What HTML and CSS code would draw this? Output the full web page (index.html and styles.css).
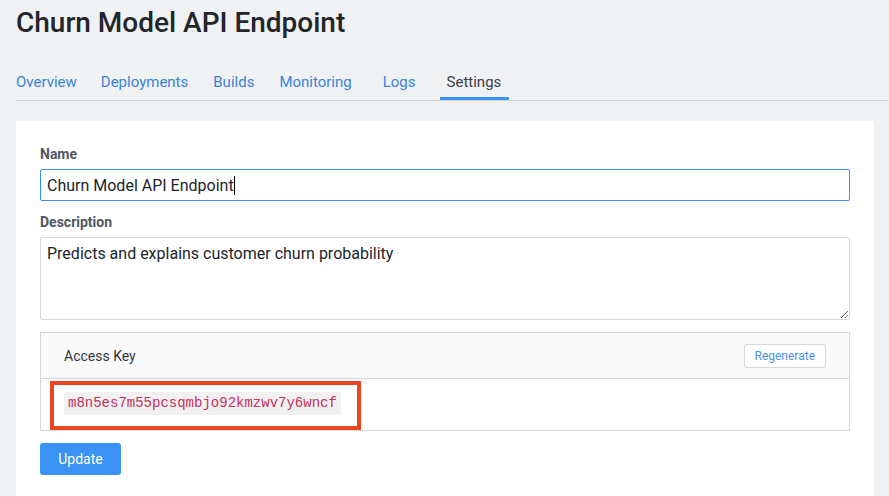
FILE: index.html
```html
<!DOCTYPE html>
<html lang="en">
<head>
<meta charset="utf-8">
<title>Churn Model API Endpoint</title>
<link rel="stylesheet" href="styles.css">
</head>
<body>
<header class="page-header">
  <h1 class="title">Churn Model API Endpoint</h1>
  <nav class="tabs">
    <a class="tab">Overview</a>
    <a class="tab">Deployments</a>
    <a class="tab">Builds</a>
    <a class="tab wide">Monitoring</a>
    <a class="tab wide">Logs</a>
    <a class="tab active">Settings</a>
  </nav>
</header>
<main class="card">
  <label class="label">Name</label>
  <div class="input focused">Churn Model API Endpoint<span class="caret"></span></div>
  <label class="label">Description</label>
  <textarea class="textarea">Predicts and explains customer churn probability</textarea>
  <section class="key-panel">
    <div class="key-head">
      <span class="key-title">Access Key</span>
      <button class="btn-outline">Regenerate</button>
    </div>
    <div class="key-body">
      <code class="key-code">m8n5es7m55pcsqmbjo92kmzwv7y6wncf</code>
      <span class="highlight"></span>
    </div>
  </section>
  <button class="btn-primary">Update</button>
</main>
</body>
</html>
```
FILE: styles.css
```css
* { box-sizing: border-box; }
html, body { margin: 0; padding: 0; }
body {
  background: #f0f1f3;
  font-family: Roboto, "Noto Sans", sans-serif;
  color: #212529;
  height: 496px;
  overflow: hidden;
}
.page-header {
  padding-left: 16px;
}
.title {
  margin: 0;
  padding-top: 6px;
  font-size: 28px;
  line-height: 34px;
  font-weight: 500;
  color: #22262b;
}
.tabs {
  display: flex;
  margin-top: 27px;
  border-bottom: 1px solid #d4d6d9;
  align-items: stretch;
}
.tab {
  font-size: 15px;
  color: #3a83d6;
  padding: 0 7px;
  margin-right: 11px;
  line-height: 30px;
  border-bottom: 3px solid transparent;
}
.tab:first-child { padding-left: 0; margin-right: 10px; }
.tab.wide { margin-right: 17px; }
.tab.active {
  color: #3c3f44;
  padding-right: 8px;
  border-bottom-color: #3a92f5;
}
.card {
  background: #fff;
  margin: 20px 15px 0 16px;
  padding: 23px 24px 21px;
  display: flex;
  flex-direction: column;
}
.label {
  font-size: 14px;
  font-weight: 700;
  color: #50575f;
  line-height: 20px;
  margin-bottom: 5px;
}
.input {
  height: 32px;
  border: 1px solid #3b8ff0;
  border-radius: 2px;
  font-size: 16px;
  padding: 0 6px;
  color: #212529;
  margin-bottom: 11px;
  display: flex;
  align-items: center;
}
.caret {
  display: inline-block;
  width: 1px;
  height: 19px;
  background: #000;
}
.textarea {
  height: 83px;
  border: 1px solid #d6d8db;
  border-radius: 2px;
  font-family: Roboto, "Noto Sans", sans-serif;
  font-size: 16px;
  line-height: 20px;
  padding: 6px 6px;
  color: #212529;
  margin: 0 0 12px;
  resize: vertical;
  outline: none;
}
.key-panel {
  border: 1px solid #d6d8db;
  margin-bottom: 12px;
}
.key-head {
  height: 46px;
  background: #fafafa;
  border-bottom: 1px solid #d6d8db;
  display: flex;
  align-items: center;
  justify-content: space-between;
  padding: 1px 23px 0;
}
.key-title {
  font-size: 14px;
  color: #32363a;
}
.btn-outline {
  height: 24px;
  padding: 0 10px;
  background: #fff;
  border: 1px solid #d6d8db;
  border-radius: 2px;
  color: #4a90e8;
  font-family: Roboto, "Noto Sans", sans-serif;
  font-size: 12px;
}
.key-body {
  position: relative;
  height: 51px;
  padding: 13px 23px 0;
}
.key-code {
  display: inline-block;
  background: #f2f0f1;
  color: #c2305c;
  font-family: "Liberation Mono", "DejaVu Sans Mono", monospace;
  font-size: 14px;
  line-height: 23px;
  padding: 0 4px;
  border-radius: 2px;
}
.highlight {
  position: absolute;
  left: 9px;
  top: 2px;
  width: 311px;
  height: 49px;
  border: 4px solid #ea4520;
}
.btn-primary {
  align-self: flex-start;
  width: 81px;
  height: 32px;
  background: #3a92f5;
  color: #fff;
  border: none;
  border-radius: 3px;
  font-family: Roboto, "Noto Sans", sans-serif;
  font-size: 14px;
}
```
